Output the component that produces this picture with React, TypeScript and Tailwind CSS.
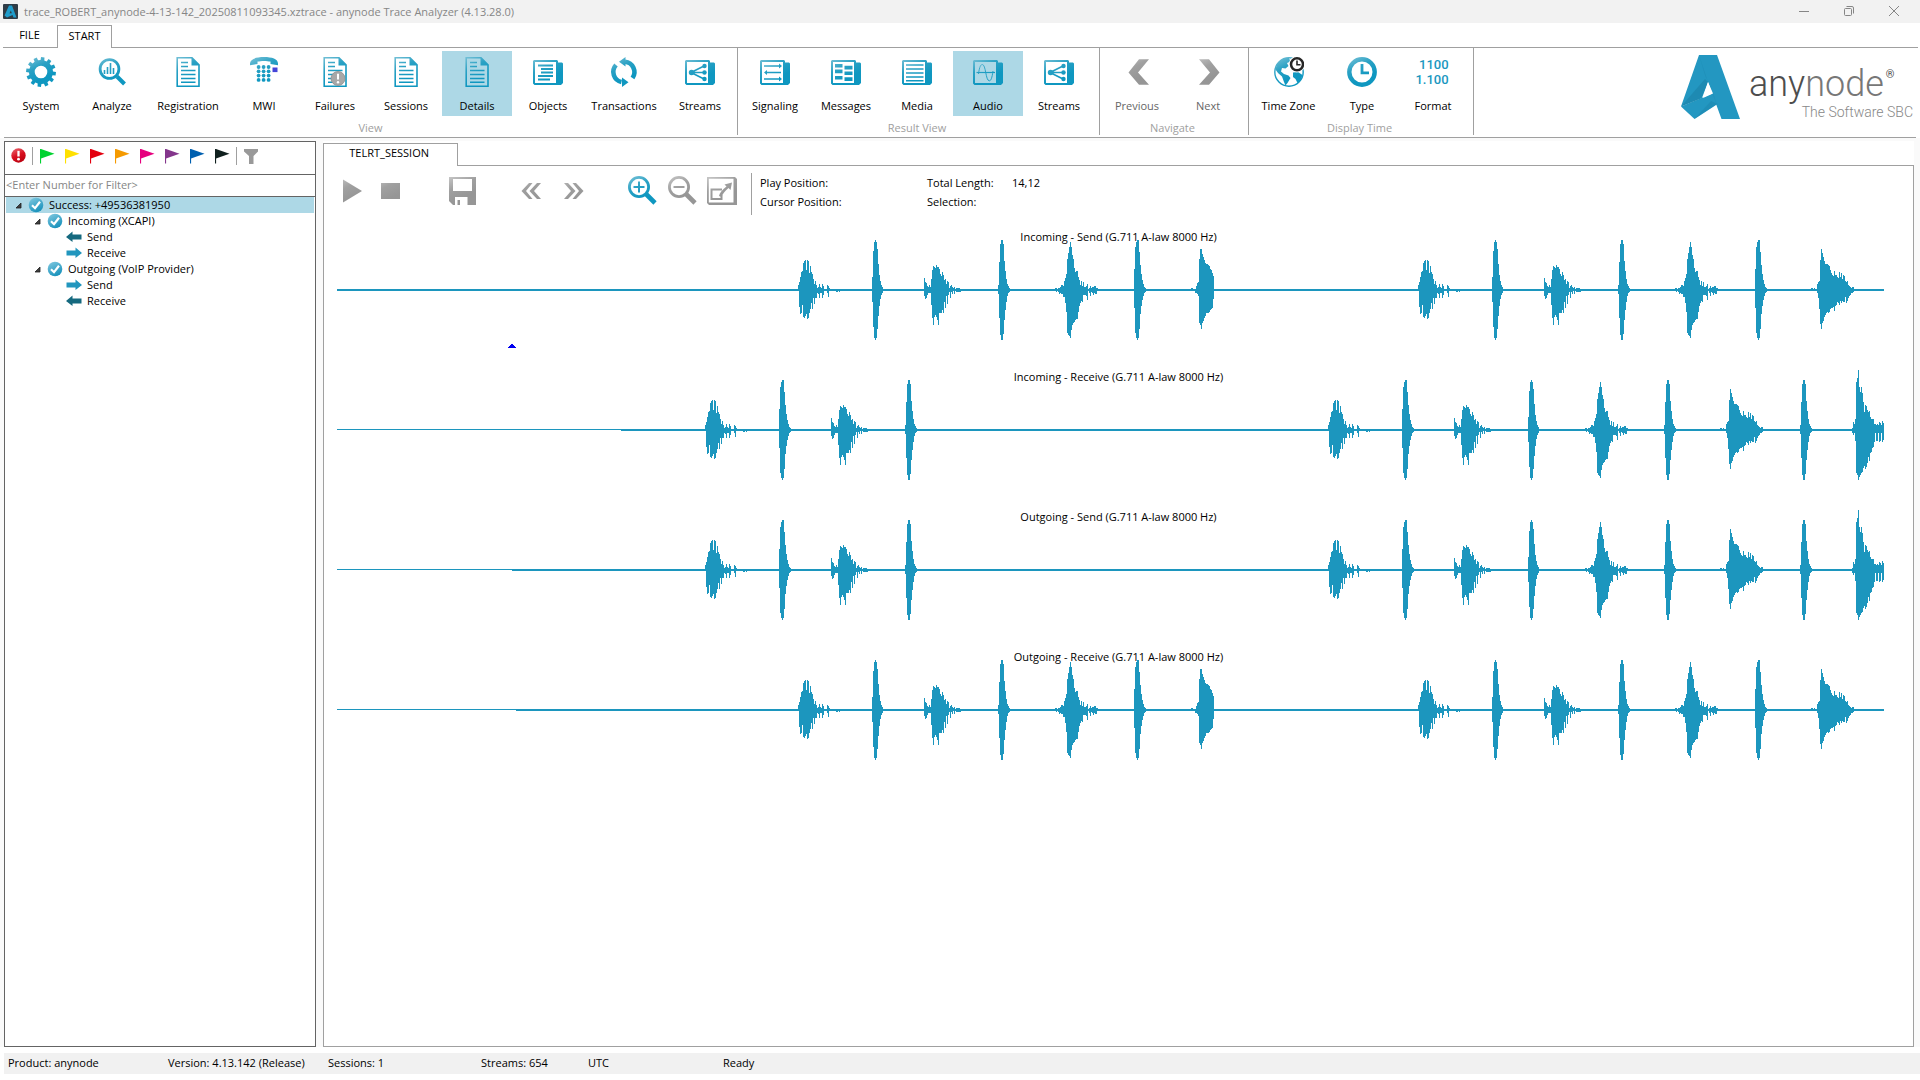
import React from "react";

/* ---------- shared paint ---------- */

const TEAL = "url(#teal)";
const GRAY = "url(#gray)";

function Gradients() {
  return (
    <svg width="0" height="0" className="absolute" aria-hidden="true">
      <defs>
        <linearGradient id="teal" gradientUnits="userSpaceOnUse" x1="4" y1="0" x2="15" y2="22">
          <stop offset="0" stopColor="#74c0d6" />
          <stop offset="0.5" stopColor="#2aa1c4" />
          <stop offset="1" stopColor="#0f97c0" />
        </linearGradient>
        <linearGradient id="gray" gradientUnits="userSpaceOnUse" x1="4" y1="0" x2="15" y2="22">
          <stop offset="0" stopColor="#c4c4c4" />
          <stop offset="0.5" stopColor="#a0a0a0" />
          <stop offset="1" stopColor="#969696" />
        </linearGradient>
        <linearGradient id="ball" x1="0.2" y1="0" x2="0.7" y2="1">
          <stop offset="0" stopColor="#7cc6de" />
          <stop offset="1" stopColor="#138fba" />
        </linearGradient>
        <linearGradient id="red" x1="0.2" y1="0" x2="0.7" y2="1">
          <stop offset="0" stopColor="#e8606a" />
          <stop offset="0.5" stopColor="#d8101f" />
          <stop offset="1" stopColor="#b8000f" />
        </linearGradient>
      </defs>
    </svg>
  );
}

function Glyph({ children }: { children: React.ReactNode }) {
  return (
    <svg viewBox="0 0 30 30" className="h-[30px] w-[30px] shrink-0" aria-hidden="true">
      {children}
    </svg>
  );
}

/* ---------- ribbon icons ---------- */

function gearPath() {
  const teeth = 12;
  const step = (Math.PI * 2) / teeth;
  const at = (r: number, a: number) => `${(15 + r * Math.cos(a)).toFixed(2)} ${(15 + r * Math.sin(a)).toFixed(2)}`;
  let d = "";
  for (let i = 0; i < teeth; i++) {
    const a = i * step + 0.12;
    d += `${i ? "L" : "M"}${at(12, a - 0.3 * step)}L${at(15, a - 0.22 * step)}L${at(15, a + 0.22 * step)}L${at(12, a + 0.3 * step)}`;
  }
  return d + "ZM21.3 15A6.3 6.3 0 1 0 8.7 15A6.3 6.3 0 1 0 21.3 15Z";
}

const Gear = () => (
  <Glyph>
    <path d={gearPath()} fill={TEAL} fillRule="evenodd" />
  </Glyph>
);

const Analyze = () => (
  <Glyph>
    <circle cx="12.5" cy="12" r="9.4" fill="none" stroke={TEAL} strokeWidth="2.8" />
    <path d="M20 19.5L27.5 27" stroke={TEAL} strokeWidth="4" />
    <path d="M7.500 13v4M10.500 10v7M13.500 6v11M16.500 11v6" stroke={TEAL} strokeWidth="1.6" fill="none" />
  </Glyph>
);

function DocShape() {
  return (
    <>
      <path d="M4.2 0.8H19L26 7.8V29.2H4.2Z" fill="none" stroke={TEAL} strokeWidth="1.6" />
      <path d="M18.5 0.5L26.5 8.6H18.5Z" fill={TEAL} />
      <path d="M8 5.5h7M8 9.5h7M8 13.5h14.500M8 17.500h14.500M8 21.500h14.500M8 25.200h14.500" stroke={TEAL} strokeWidth="1.5" fill="none" />
    </>
  );
}

const Doc = () => (
  <Glyph>
    <DocShape />
  </Glyph>
);

const Failures = () => (
  <Glyph>
    <DocShape />
    <circle cx="18" cy="21.500" r="7" fill="#a8a8a8" stroke="#8f8f8f" strokeWidth="0.8" />
    <path d="M18 16.800v5.700" stroke="#fff" strokeWidth="2" />
    <circle cx="18" cy="25.300" r="1.2" fill="#fff" />
  </Glyph>
);

const Phone = () => (
  <Glyph>
    <path d="M1 6.500C1 2 7 0 15 0S29 2 29 6.500V8.200L21.500 7V4.600C18 3.700 12 3.700 8.500 4.600V7L1 8.200Z" fill={TEAL} />
    {[10, 14.300, 18.600, 22.900].map((y) =>
      [9.600, 14.600, 19.600].map((x) => <circle key={`${x}-${y}`} cx={x} cy={y} r="1.9" fill={TEAL} />)
    )}
    <rect x="23.500" y="10.500" width="5" height="4.600" fill="#4444d8" />
  </Glyph>
);

function Frame({ children }: { children: React.ReactNode }) {
  return (
    <Glyph>
      <path
        d="M1 3H24L25 4V5.500H29L30 6.500V26L28 28H1.500L0 26.500V4ZM2 5V26H23V5Z"
        fill={TEAL}
        fillRule="evenodd"
      />
      {children}
    </Glyph>
  );
}

const Objects = () => (
  <Frame>
    <path d="M5 8.500h15M8 12h12M8 15.500h12M5 19h15M5 22.500h12" stroke={TEAL} strokeWidth="2" fill="none" />
  </Frame>
);

const Share = () => (
  <Frame>
    <path d="M6 15.500L19 9M6 15.500H19M6 15.500L19 22" stroke={TEAL} strokeWidth="1.6" fill="none" />
    <circle cx="6.500" cy="15.500" r="2.700" fill={TEAL} />
    <circle cx="19.500" cy="9" r="2.200" fill={TEAL} />
    <circle cx="19.500" cy="15.500" r="2.200" fill={TEAL} />
    <circle cx="19.500" cy="22" r="2.200" fill={TEAL} />
  </Frame>
);

const Signaling = () => (
  <Frame>
    <path d="M4 9h16M6 15.500h15M4 22h16" stroke={TEAL} strokeWidth="1.7" fill="none" />
    <path d="M19 6.500L22 9L19 11.500ZM7 13L4 15.500L7 18ZM19 19.500L22 22L19 24.500Z" fill={TEAL} />
  </Frame>
);

const Messages = () => (
  <Frame>
    <path d="M4 7h7.500v3.500H4ZM4 12.500h7.500v3.800H4ZM4 19h7.500v3.500H4ZM13.500 8.800h8v3.600h-8ZM13.500 14.500h8v3.600h-8ZM13.500 20.300h8v3.700h-8Z" fill={TEAL} />
  </Frame>
);

const Media = () => (
  <Frame>
    <path d="M4 8h17.500M4 12h17.500M4 16h17.500M4 20h17.500M4 23.700h17.500" stroke={TEAL} strokeWidth="1.6" fill="none" />
  </Frame>
);

const Audio = () => (
  <Frame>
    <path d="M3.500 15.500h18.500" stroke={TEAL} strokeWidth="1.200" fill="none" />
    <path d="M5.500 17C6.500 9 8 7.500 9.300 7.500C13 7.500 12.500 23.800 16.300 23.800C18 23.800 19 21 20 14" stroke={TEAL} strokeWidth="0.900" fill="none" />
  </Frame>
);

const Cycle = () => (
  <Glyph>
    <path d="M12.500 25A10.300 10.300 0 0 1 7 8" fill="none" stroke={TEAL} strokeWidth="4.600" />
    <path d="M16 4.800A10.300 10.300 0 0 1 23.500 21" fill="none" stroke={TEAL} strokeWidth="4.600" />
    <path d="M16.500 0V9.500L10 4.700ZM13 20.500V30L19.500 25.300Z" fill={TEAL} />
  </Glyph>
);

const Prev = () => (
  <Glyph>
    <path d="M6.500 15.500L17 2.300H27L16 15.500L27 27.700H17Z" fill={GRAY} />
  </Glyph>
);

const Next = () => (
  <Glyph>
    <path d="M26.500 15.500L16 2.300H6L17 15.500L6 27.700H16Z" fill={GRAY} />
  </Glyph>
);

const Globe = () => (
  <Glyph>
    <circle cx="15" cy="15" r="14.200" fill="#fff" stroke={TEAL} strokeWidth="1.400" />
    <path
      d="M3 7C6 2.500 11 0.800 15 1L16.500 4.500L13 6L14.500 9L11.500 11.500L8 11L7 14.500L10 17L14.500 18.500L16.500 21L13.500 26L11.500 28.500L10 25L8 19.500L4 16L1.500 12.500Z"
      fill={TEAL}
    />
    <path d="M19 15.500L24 15L28.500 18C27.500 22 26 25 23.500 26L21.500 22L19 20Z" fill={TEAL} />
    <circle cx="23" cy="7.300" r="8.200" fill="#fff" />
    <circle cx="23" cy="7.300" r="6" fill="#fff" stroke="#262626" strokeWidth="2.500" />
    <path d="M23 3.600V7.800H26.500" fill="none" stroke="#262626" strokeWidth="1.600" />
  </Glyph>
);

const Clock = () => (
  <Glyph>
    <circle cx="15" cy="15" r="12.700" fill="none" stroke={TEAL} strokeWidth="4.400" />
    <path d="M15 7V15.800H22" fill="none" stroke={TEAL} strokeWidth="2.800" />
  </Glyph>
);

const Format = () => (
  <span className="block h-[30px] pr-[2px] text-right font-[Roboto,sans-serif] text-[13px] leading-[15px] font-medium text-[#1a97bf]" aria-hidden="true">
    1100
    <br />
    1.100
  </span>
);

/* ---------- ribbon ---------- */

type Item = { label: string; icon: () => React.ReactElement; width?: string; active?: boolean; muted?: boolean };
type Group = { name: string; items: Item[] };

const GROUPS: Group[] = [
  {
    name: "View",
    items: [
      { label: "System", icon: Gear },
      { label: "Analyze", icon: Analyze },
      { label: "Registration", icon: Doc, width: "w-20" },
      { label: "MWI", icon: Phone },
      { label: "Failures", icon: Failures },
      { label: "Sessions", icon: Doc },
      { label: "Details", icon: Doc, active: true },
      { label: "Objects", icon: Objects },
      { label: "Transactions", icon: Cycle, width: "w-20" },
      { label: "Streams", icon: Share },
    ],
  },
  {
    name: "Result View",
    items: [
      { label: "Signaling", icon: Signaling },
      { label: "Messages", icon: Messages },
      { label: "Media", icon: Media },
      { label: "Audio", icon: Audio, active: true },
      { label: "Streams", icon: Share },
    ],
  },
  {
    name: "Navigate",
    items: [
      { label: "Previous", icon: Prev, muted: true },
      { label: "Next", icon: Next, muted: true },
    ],
  },
  {
    name: "Display Time",
    items: [
      { label: "Time Zone", icon: Globe, width: "w-[75px]" },
      { label: "Type", icon: Clock },
      { label: "Format", icon: Format },
    ],
  },
];

function RibbonButton({ item }: { item: Item }) {
  const Icon = item.icon;
  return (
    <button
      type="button"
      className={`flex h-[65px] flex-col items-center justify-between pt-[6px] pb-[2px] leading-4 whitespace-nowrap ${item.width ?? "w-[70px]"} ${
        item.active ? "bg-[#add8e6]" : ""
      } ${item.muted ? "text-[#666]" : "text-black"}`}
    >
      <Icon />
      {item.label}
    </button>
  );
}

function Logo() {
  return (
    <div className="ml-auto flex items-start pt-[7px] pr-[3px]" role="img" aria-label="anynode, The Software SBC">
      <svg viewBox="0 0 59 64" className="h-16 w-[59px]" aria-hidden="true">
        <path d="M18 0H36L59 64H40.500L27 27L21 43L0 51.500Z" fill="#2397c1" />
        <path d="M0 51.500L32.500 38L36.500 49L13.500 64Z" fill="#2397c1" />
        <path d="M0 51.500L20 43.500L27 27L24 24Z" fill="#1b7fa6" opacity="0.550" />
        <path d="M18 0L27 27L36 50L32 38L24 20Z" fill="#1b7fa6" opacity="0.350" />
        <path d="M27 27L32 38.500L22 43Z" fill="#fff" />
        <path d="M36.500 49L13.500 64L30 46Z" fill="#1b7fa6" opacity="0.350" />
      </svg>
      <div className="flex flex-col items-end pt-[9px] pl-[9px] font-[Roboto,sans-serif]">
        <div className="flex w-[164px] items-start text-[36px] leading-[40px] font-light text-[#4d4d4d]">
          <span>any</span>
          <span className="text-[#777]">node</span>
          <span className="pt-[5px] pl-[2px] text-[11px] leading-3 font-normal">®</span>
        </div>
        <div className="text-[14px] leading-4 font-light whitespace-nowrap text-[#888]">The Software SBC</div>
      </div>
    </div>
  );
}

function Ribbon() {
  return (
    <>
      <div className="ml-[3px] flex h-[25px] items-end bg-white text-[11px]" role="tablist">
        <button type="button" role="tab" className="h-[25px] w-[54px] border-b border-[#a0a0a0] pr-px">
          FILE
        </button>
        <button type="button" role="tab" aria-selected="true" className="h-[23px] w-[55px] border border-b-0 border-[#a0a0a0] pb-[2px]">
          START
        </button>
        <div className="mr-[2px] h-[25px] flex-1 border-b border-[#a0a0a0]" />
      </div>
      <div className="mr-1 ml-1 flex h-[90px] border-b border-[#a0a0a0] bg-white">
        {GROUPS.map((g) => (
          <section
            key={g.name}
            aria-label={g.name}
            className="mb-[2px] border-r border-[#a0a0a0] pt-[3px] pr-[5px] pl-[2px] first:pr-[2px]"
          >
            <div className="flex gap-px">
              {g.items.map((it, i) => (
                <RibbonButton key={i} item={it} />
              ))}
            </div>
            <div className="pt-1 text-center leading-4 text-[#a0a0a0]">{g.name}</div>
          </section>
        ))}
        <Logo />
      </div>
    </>
  );
}

/* ---------- left panel ---------- */

const FLAGS = [
  ["Green", "#00d230"],
  ["Yellow", "#ffe000"],
  ["Red", "#e3000f"],
  ["Orange", "#f59a00"],
  ["Magenta", "#e6007e"],
  ["Violet", "#84368c"],
  ["Blue", "#0060b0"],
  ["Black", "#10201e"],
];

type Row = { level: number; kind: "ok" | "left" | "right"; text: string; selected?: boolean };

const ROWS: Row[] = [
  { level: 0, kind: "ok", text: "Success: +49536381950", selected: true },
  { level: 1, kind: "ok", text: "Incoming (XCAPI)" },
  { level: 2, kind: "left", text: "Send" },
  { level: 2, kind: "right", text: "Receive" },
  { level: 1, kind: "ok", text: "Outgoing (VoIP Provider)" },
  { level: 2, kind: "right", text: "Send" },
  { level: 2, kind: "left", text: "Receive" },
];

const INDENT = ["pl-[9px]", "pl-7", "pl-[47px]"];

function RowIcon({ kind }: { kind: Row["kind"] }) {
  if (kind === "ok")
    return (
      <svg viewBox="0 0 16 16" className="size-4" aria-hidden="true">
        <circle cx="8" cy="8" r="7.300" fill="url(#ball)" />
        <path d="M4 8.300L7 11.200L12 4.800" fill="none" stroke="#fff" strokeWidth="2.200" />
      </svg>
    );
  return (
    <svg viewBox="0 0 16 16" className="size-4" aria-hidden="true">
      {kind === "right" ? (
        <path d="M0.500 5.500H9.500V2.500L16 8L9.500 13V10.500H0.500Z" fill="#2196be" />
      ) : (
        <path d="M15.500 5.500H6.500V2.500L0 8L6.500 13V10.500H15.500Z" fill="#15697f" />
      )}
    </svg>
  );
}

function Sidebar() {
  return (
    <aside className="flex w-[312px] shrink-0 flex-col border border-[#646464] bg-white">
      <div className="flex h-8 items-center pb-[5px] pl-[6px]">
        <button type="button" aria-label="Errors" className="mr-[6px]">
          <svg viewBox="0 0 15 15" className="size-[15px]" aria-hidden="true">
            <circle cx="7.500" cy="7.500" r="7.200" fill="url(#red)" />
            <path d="M7.500 2.800V8.500" stroke="#fff" strokeWidth="2.300" />
            <circle cx="7.500" cy="11.200" r="1.400" fill="#fff" />
          </svg>
        </button>
        <div className="mr-[7px] h-[18px] w-px bg-[#a0a0a0]" />
        <div className="flex gap-[10px]">
          {FLAGS.map(([name, color]) => (
            <button key={name} type="button" aria-label={`${name} flag`}>
              <svg viewBox="0 0 15 16" className="h-4 w-[15px]" aria-hidden="true">
                <path d="M0.500 1V15.500" stroke={color} strokeWidth="1.200" />
                <path d="M1 1L14.500 5.800L1 10.500Z" fill={color} />
              </svg>
            </button>
          ))}
        </div>
        <div className="mr-[7px] ml-[6px] h-[18px] w-px bg-[#a0a0a0]" />
        <button type="button" aria-label="Filter">
          <svg viewBox="0 0 14 16" className="h-4 w-[14px]" aria-hidden="true">
            <path d="M0 1H14V3.500L9.500 8V16H5V8L0 3.500Z" fill="#999" />
          </svg>
        </button>
      </div>
      <input
        type="text"
        aria-label="Filter by number"
        placeholder="<Enter Number for Filter>"
        className="h-[23px] border-y border-[#646464] pb-[2px] pl-px text-[11px] outline-none placeholder:text-[#868686]"
      />
      <ul role="tree" aria-label="Sessions" className="px-px">
        {ROWS.map((r, i) => (
          <li
            key={i}
            role="treeitem"
            aria-selected={!!r.selected}
            className={`flex h-4 items-center leading-4 ${INDENT[r.level]} ${r.selected ? "bg-[#add8e6]" : ""}`}
          >
            <svg viewBox="0 0 7 7" className="mr-[6px] size-[7px]" aria-hidden="true">
              {r.kind === "ok" && <path d="M6 1V6H1Z" fill="#404040" stroke="#222" strokeWidth="0.800" />}
            </svg>
            <RowIcon kind={r.kind} />
            <span className="pl-[5px] text-black">{r.text}</span>
          </li>
        ))}
      </ul>
    </aside>
  );
}

/* ---------- waveforms ---------- */

type Shape = number[][];

/* Each column holds the extent above and below the centre line. */
const SHAPES: Record<string, Shape> = {
  a: [[5,1],[8,17],[13,24],[18,23],[19,15],[27,27],[29,28],[30,26],[20,24],[30,29],[29,28],[17,23],[24,19],[18,13],[16,19],[11,8],[6,14],[9,8],[5,8],[2,3],[3,4],[6,8],[3,3],[2,3],[6,8],[4,5],[1,1],[1,1],[1,1],[5,3],[4,7],[2,1],[1,1],[1,1],[1,1],[1,1],[1,1],[1,1],[1,2],[1,2],[1,1],[1,2]],
  b: [[13,12],[39,37],[48,48],[50,50],[48,48],[41,39],[26,26],[15,16],[9,9],[5,5],[3,3]],
  c: [[12,6],[8,9],[7,8],[4,5],[3,3],[5,3],[3,3],[11,15],[20,28],[24,35],[23,27],[22,25],[25,27],[23,30],[23,35],[21,23],[16,23],[14,23],[18,20],[15,23],[10,12],[11,18],[6,6],[9,14],[8,5],[2,2],[4,8],[5,2],[3,4],[2,1],[3,4],[1,1],[2,2],[2,2],[2,2],[2,2],[1,2]],
  d: [[5,4],[28,28],[46,45],[50,50],[50,50],[46,44],[29,30],[19,20],[11,12],[6,6],[4,3],[2,2]],
  e: [[2,1],[2,2],[1,1],[2,2],[2,4],[3,3],[5,4],[5,4],[4,7],[9,7],[12,13],[16,22],[31,43],[37,45],[43,46],[48,48],[43,40],[35,35],[31,33],[22,32],[18,30],[19,29],[19,29],[13,22],[10,16],[5,13],[9,11],[4,12],[8,5],[3,5],[3,5],[4,6],[6,10],[1,1],[2,3],[4,6],[2,2],[3,3],[3,5],[4,3],[4,4],[2,4],[2,1]],
  f: [[21,18],[43,43],[48,48],[50,50],[50,48],[38,39],[25,24],[16,16],[10,10],[6,6],[3,3],[2,2]],
  g: [[2,1],[2,1],[1,1],[2,1],[1,1],[1,1],[6,3],[8,8],[9,19],[30,34],[41,39],[37,33],[33,31],[29,27],[26,25],[26,23],[26,22],[25,23],[24,22],[20,19],[17,18],[15,18],[14,17],[19,21],[15,16],[15,15],[13,12],[12,13],[18,15],[13,11],[17,13],[11,11],[15,12],[14,12],[9,7],[8,13],[9,11],[5,8],[4,6],[3,5],[2,3],[3,3],[3,2]],
  s: [[2,1],[2,1],[1,1],[1,1],[1,3],[4,3],[7,4],[8,6],[31,33],[41,35],[41,39],[36,33],[33,31],[30,28],[27,26],[26,23],[26,23],[25,23],[24,22],[21,20],[20,19],[17,18],[14,9]],
  h: [[2,3],[8,5],[6,3],[11,11],[48,43],[52,45],[60,50],[43,47],[38,45],[43,43],[37,42],[28,38],[18,36],[25,39],[24,37],[20,33],[18,27],[19,31],[13,23],[11,22],[11,18],[11,17],[6,12],[6,3],[5,11],[6,11],[5,3],[8,12],[7,11],[5,3],[9,12],[7,10]],
};

type Burst = [string, number];

const SEND: Burst[] = [
  ["a", 461], ["b", 535], ["c", 587], ["d", 661], ["e", 718], ["f", 797], ["s", 854],
  ["a", 1081], ["b", 1155], ["c", 1207], ["d", 1281], ["e", 1338], ["f", 1418], ["g", 1474],
];
const RECEIVE: Burst[] = [
  ["a", 368], ["f", 442], ["c", 494], ["d", 568],
  ["a", 991], ["f", 1065], ["c", 1117], ["b", 1191], ["e", 1248], ["d", 1327], ["g", 1383], ["d", 1463], ["h", 1515],
];

type Track = { title: string; thickFrom: number; bursts: Burst[]; marker?: boolean };

const TRACKS: Track[] = [
  { title: "Incoming - Send (G.711 A-law 8000 Hz)", thickFrom: 0, bursts: SEND, marker: true },
  { title: "Incoming - Receive (G.711 A-law 8000 Hz)", thickFrom: 284, bursts: RECEIVE },
  { title: "Outgoing - Send (G.711 A-law 8000 Hz)", thickFrom: 175, bursts: RECEIVE },
  { title: "Outgoing - Receive (G.711 A-law 8000 Hz)", thickFrom: 179, bursts: SEND },
];

function wavePath(t: Track) {
  let d = `M0 59H1547V60H0ZM${t.thickFrom} 60H1547V61H${t.thickFrom}Z`;
  for (const [key, start] of t.bursts) {
    SHAPES[key].forEach(([up, down], i) => {
      d += `M${start + i} ${60 - up}h1v${up + down}h-1Z`;
    });
  }
  return d;
}

function TrackView({ track }: { track: Track }) {
  return (
    <figure className="relative h-[140px] pt-px pr-[29px] pl-[13px]">
      <svg
        viewBox="0 0 1547 120"
        preserveAspectRatio="none"
        className="block h-[120px] w-full overflow-visible"
        shapeRendering="crispEdges"
        aria-hidden="true"
      >
        <path d={wavePath(track)} fill="#1c96be" fillRule="nonzero" />
        {track.marker && <path d="M174 114h2v1h1v1h1v1h1v1h-8v-1h1v-1h1v-1h1Z" fill="#0000f0" />}
      </svg>
      <figcaption className="absolute inset-x-0 top-0 text-center leading-4 text-black">{track.title}</figcaption>
    </figure>
  );
}

/* ---------- player toolbar ---------- */

function Tool({ label, className, children }: { label: string; className: string; children: React.ReactNode }) {
  return (
    <button type="button" aria-label={label} className={className}>
      <Glyph>{children}</Glyph>
    </button>
  );
}

function PlayerBar() {
  return (
    <div className="flex h-[60px] items-start pt-[7px] pl-[14px]">
      <div className="flex pt-[3px]">
        <Tool label="Play" className="mr-2">
          <path d="M5 3.500L24 15L5 26.500Z" fill={GRAY} />
        </Tool>
        <Tool label="Stop" className="mr-[42px]">
          <path d="M5 7H24V23H5Z" fill={GRAY} />
        </Tool>
        <Tool label="Save" className="mr-10">
          <path d="M1 1H28V29H5L1 25ZM5 3V15H24V3Z" fill={GRAY} fillRule="evenodd" />
          <path d="M7 29V21H19.500V29H12V24H9.500V29Z" fill="#fff" />
        </Tool>
        <Tool label="Rewind" className="mr-3">
          <path d="M3.500 15L11 7H14.500L8 15L14.500 23H11ZM11.500 15L19 7H23L16 15L23 23H19Z" fill={GRAY} />
        </Tool>
        <Tool label="Forward" className="mr-[37px]">
          <path d="M23.500 15L16 7H12.500L19 15L12.500 23H16ZM15.500 15L8 7H4L11 15L4 23H8Z" fill={GRAY} />
        </Tool>
        <Tool label="Zoom in" className="mr-[10px]">
          <circle cx="12" cy="11" r="9.600" fill="none" stroke={TEAL} strokeWidth="2.800" />
          <path d="M19 18L28 27" stroke={TEAL} strokeWidth="4.600" />
          <path d="M6.500 11H17.500M12 5.500V16.500" stroke={TEAL} strokeWidth="2" />
        </Tool>
        <Tool label="Zoom out" className="mr-[10px]">
          <circle cx="12" cy="11" r="9.600" fill="none" stroke={GRAY} strokeWidth="2.800" />
          <path d="M19 18L28 27" stroke={GRAY} strokeWidth="4.600" />
          <path d="M6.500 10H17.500V12H6.500Z" fill={GRAY} />
        </Tool>
        <Tool label="Fit to window" className="mr-[14px]">
          <path d="M0 1H28L30 3V29H2L0 27ZM1.800 2.800V26.500H26.500V2.800Z" fill={GRAY} fillRule="evenodd" />
          <path d="M15 13.500H4.500V23H14.500V19" fill="none" stroke={GRAY} strokeWidth="2" />
          <path d="M12 20C12.500 17 15 14 19.500 10.500L17.500 8.500L25 6.500L23.500 14L21.500 12C18 15 15.500 18 14.500 21Z" fill={GRAY} />
        </Tool>
      </div>
      <dl className="grid h-[42px] grid-cols-[82px_85px_85px_1fr] content-start gap-y-[3px] border-l border-[#a0a0a0] pt-[2px] pl-2 leading-4 whitespace-nowrap text-black">
        <dt>Play Position:</dt>
        <dd />
        <dt>Total Length:</dt>
        <dd>14,12</dd>
        <dt>Cursor Position:</dt>
        <dd />
        <dt>Selection:</dt>
        <dd />
      </dl>
    </div>
  );
}

function SessionPanel() {
  return (
    <main className="mr-[6px] ml-[7px] flex flex-1 flex-col bg-white pt-[2px]">
      <div className="flex" role="tablist">
        <button type="button" role="tab" aria-selected="true" className="h-[23px] w-[135px] border border-b-0 border-[#a0a0a0] pr-7 pb-1 text-right">
          TELRT_SESSION
        </button>
        <div className="flex-1 border-b border-[#a0a0a0]" />
      </div>
      <div className="flex-1 border border-t-0 border-[#a0a0a0]">
        <PlayerBar />
        <div className="pt-[3px]">
          {TRACKS.map((t) => (
            <TrackView key={t.title} track={t} />
          ))}
        </div>
      </div>
    </main>
  );
}

/* ---------- window ---------- */

function TitleBar() {
  return (
    <header className="flex h-[23px] shrink-0 items-center bg-[#f2f2f2] pl-[3px] text-[#868686]">
      <svg viewBox="0 0 15 15" className="mr-[6px] size-[15px]" aria-hidden="true">
        <rect width="15" height="15" rx="1" fill="#2f3c46" />
        <path d="M6 1.500H9L13.500 13.500H10.500L7.800 6.500L6.500 9.500L9 9L9.500 11L4 13.500L1.500 11.500Z" fill="#1f9ccb" />
      </svg>
      <span className="flex-1 leading-4">trace_ROBERT_anynode-4-13-142_20250811093345.xztrace - anynode Trace Analyzer (4.13.28.0)</span>
      <div className="flex items-center gap-[35px] pr-[21px] pb-[2px]">
        <button type="button" aria-label="Minimize">
          <svg viewBox="0 0 10 10" className="size-[10px]" aria-hidden="true">
            <path d="M0 5.500H10" stroke="#868686" />
          </svg>
        </button>
        <button type="button" aria-label="Restore">
          <svg viewBox="0 0 10 10" className="size-[10px]" fill="none" stroke="#868686" aria-hidden="true">
            <rect x="0.500" y="2.500" width="7" height="7" rx="1" />
            <path d="M2.500 0.500H8A1.500 1.500 0 0 1 9.500 2V7.500" />
          </svg>
        </button>
        <button type="button" aria-label="Close">
          <svg viewBox="0 0 10 10" className="size-[10px]" stroke="#868686" aria-hidden="true">
            <path d="M0 0L10 10M10 0L0 10" />
          </svg>
        </button>
      </div>
    </header>
  );
}

function StatusBar() {
  return (
    <footer className="mt-[6px] mb-[6px] ml-1 flex h-[21px] shrink-0 items-center bg-[#f1f1f1] pl-1 text-black">
      <span className="w-40">Product: anynode</span>
      <span className="w-40">Version: 4.13.142 (Release)</span>
      <span className="w-[153px]">Sessions: 1</span>
      <span className="w-[107px]">Streams: 654</span>
      <span className="w-[135px]">UTC</span>
      <span>Ready</span>
    </footer>
  );
}

export default function App() {
  return (
    <div className="flex min-h-screen flex-col bg-white font-['Open_Sans',sans-serif] text-[11px] text-black">
      <Gradients />
      <TitleBar />
      <Ribbon />
      <div className="flex flex-1 bg-[#fafafa] pt-[3px] pl-1">
        <Sidebar />
        <SessionPanel />
      </div>
      <StatusBar />
    </div>
  );
}
